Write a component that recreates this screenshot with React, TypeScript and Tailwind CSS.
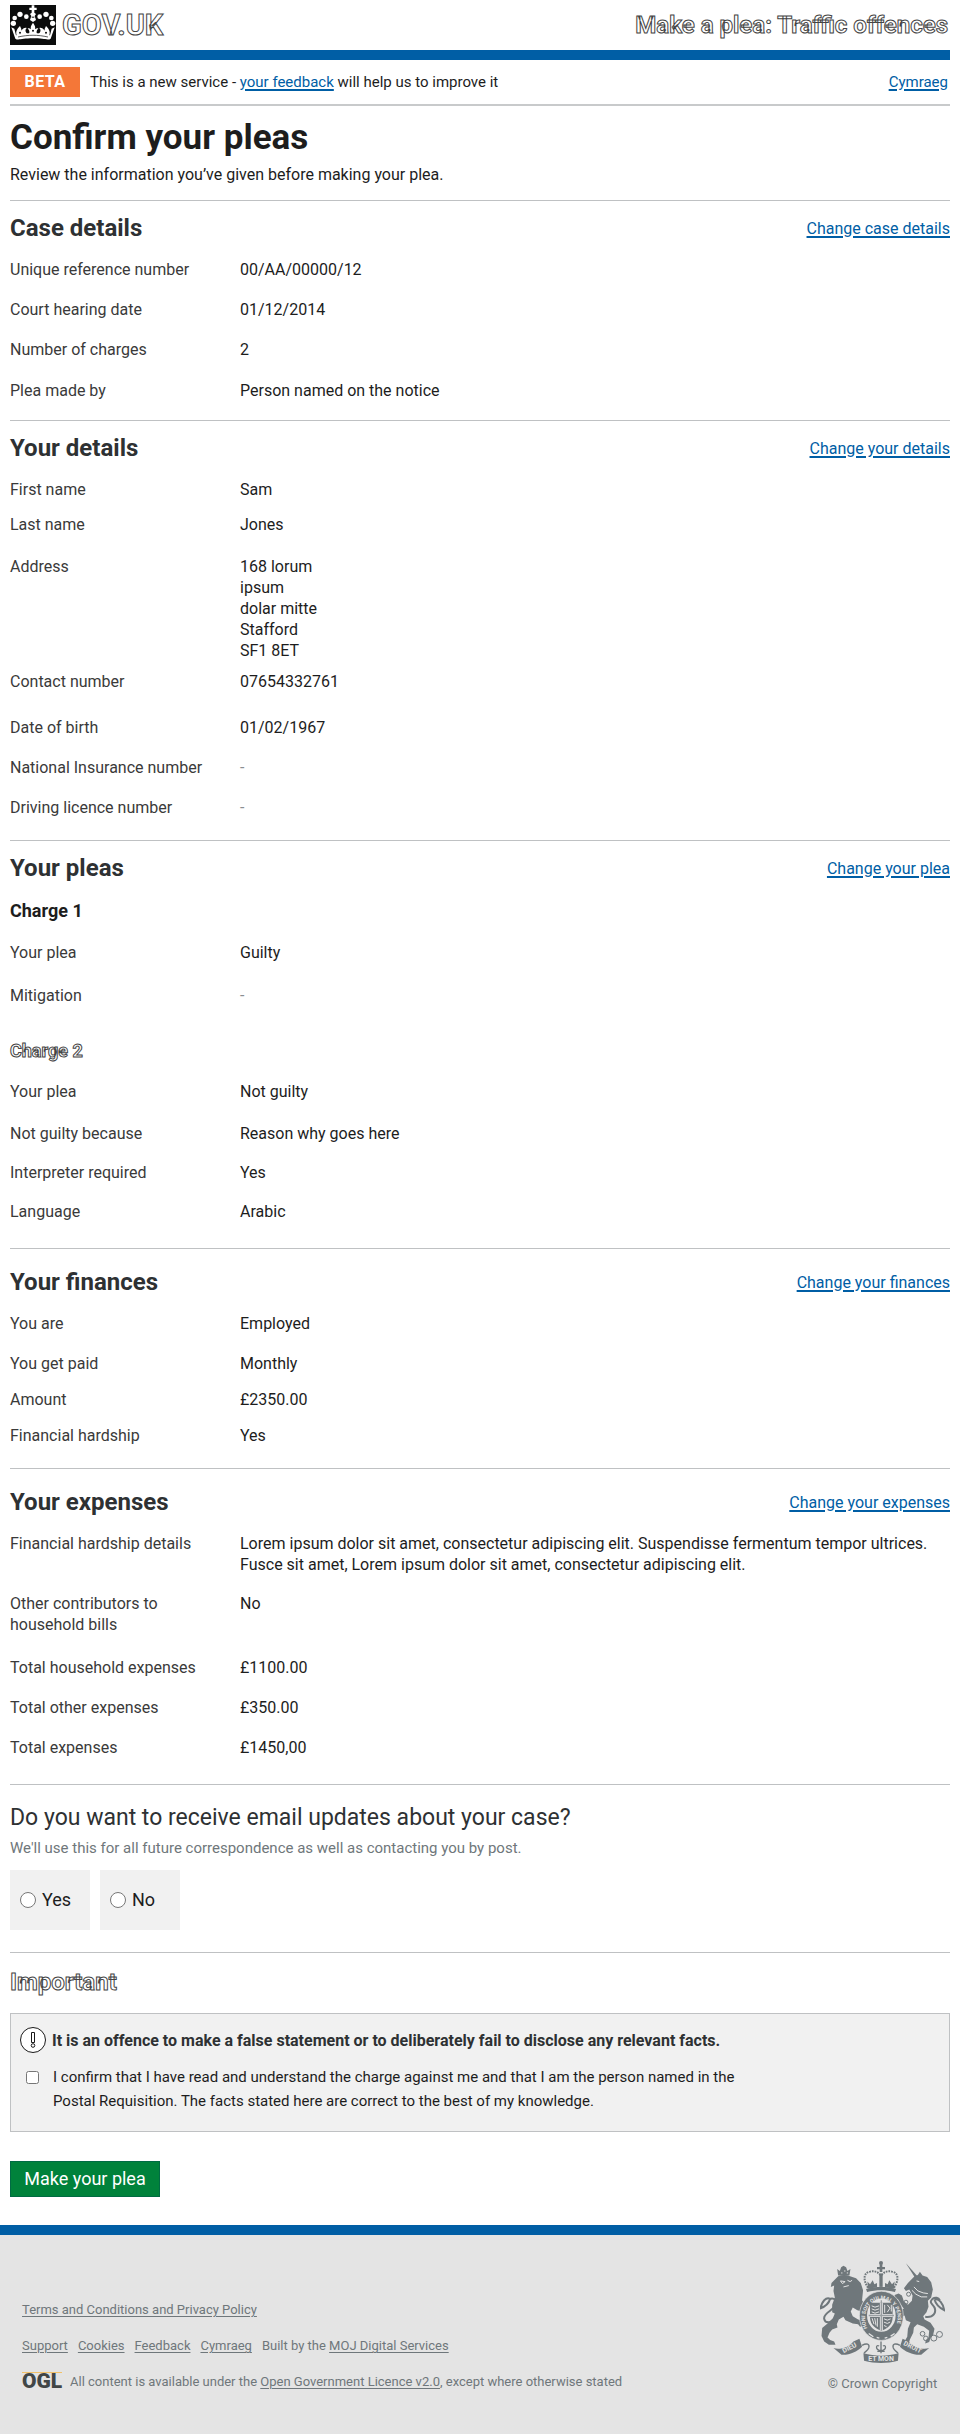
import type { ReactNode } from "react";

const outlined = "text-white [-webkit-text-stroke:1px_#444]";

function CrownLogo() {
  const pearls: [number, number, number][] = [
    [40, 70, 8],
    [44, 54, 7],
    [60, 43, 8],
    [79, 50, 7],
    [158, 70, 8],
    [154, 54, 7],
    [138, 43, 8],
    [119, 50, 7],
  ];
  return (
    <svg viewBox="30 15 138 120" className="h-10 w-[46px] shrink-0" aria-hidden="true">
      <rect x="30" y="15" width="138" height="120" fill="#0b0c0c" />
      <g fill="#fff">
        {pearls.map(([x, y, r]) => (
          <circle key={`${x}-${y}`} cx={x} cy={y} r={r} />
        ))}
        <path d="M95 16h8v7h7v7h-7v8l5 4-4 6 4 12-9 6-9-6 4-12-4-6 5-4v-8h-7v-7h7z" />
        <path d="M34 82l9 4 5 20c34-9 68-9 102 0l5-20 9-4-12 34c-8 6-20-1-53-1s-45 7-53 1z" />
        <path d="M50 106c-4-12 2-20 10-28 3 6 5 10 4 14 4-6 10-10 16-8-6 6-4 12 2 18zM148 106c4-12-2-20-10-28-3 6-5 10-4 14-4-6-10-10-16-8 6 6 4 12-2 18z" />
        <path d="M99 68c6 8 8 14 6 20 4-4 8-4 10-2-6 4-6 10-4 16H87c2-6 2-12-4-16 2-2 6-2 10 2-2-6 0-12 6-20z" />
      </g>
      <g fill="#0b0c0c">
        <circle cx="60" cy="98" r="3" />
        <circle cx="138" cy="98" r="3" />
        <circle cx="99" cy="92" r="3" />
        <path d="M95 50h8v3h-8z" />
      </g>
      <path d="M54 111c32-7 58-7 90 0" fill="none" stroke="#0b0c0c" strokeWidth="2" />
    </svg>
  );
}

function RoyalArms() {
  return (
    <svg viewBox="120 122 375 310" className="h-[103px] w-[125px]" aria-hidden="true">
      {/* crown */}
      <g fill="#6f777b">
        <circle cx="303" cy="128" r="6" />
        <path d="M299 132h8v8h8v7h-8v8h-8v-8h-8v-7h8z" />
        <path d="M258 206c30-8 60-8 90 0l-3 9c-28-7-56-7-84 0z" />
        <path d="M262 184l8 8 8-12 5 12 8-4v14l-27 3zM344 184l-8 8-8-12-5 12-8-4v14l27 3z" />
        <path d="M298 160h10v40h-10z" />
      </g>
      <g fill="none" stroke="#6f777b" strokeWidth="6" strokeDasharray="5 3">
        <path d="M264 202c-14-20-16-44 6-48 14-4 26 2 32 12" />
        <path d="M342 202c14-20 16-44-6-48-14-4-26 2-32 12" />
      </g>

      {/* lion */}
      <g fill="#6f777b">
        <path d="M171 146l8 6 4-11 7-5 8 5 4 11 9-6-3 20h-34z" />
        <path d="M174 168q18-8 36 0l18 6 14 14 7 22-3 30 8 14-8 20-14-4-14-8-6 12 6 14 16 10 14 4 2 14-10 4-6-8-16-2-22-10-6-10-14 8-6 14 2 10-16 6-8 10-6 14 8 8 12 4 4 10-20 0-14-10-8-16 2-24 16-14 16-16 6-14-8-4 0-22 8-22-4-20 2-16-10 4 2-12 6-6z" />
      </g>
      <path
        d="M168 288c-16 26-34 20-36 8-4-20 36-26 36-48 0-12-12-16-20-10M150 236c-12-8-26 10-29 28 12-4 24-12 29-28z"
        fill="none"
        stroke="#6f777b"
        strokeWidth="6"
      />
      <path
        d="M181 182l14 2-8 6zM202 180l8 4 6-4M190 200l16-4M183 158h4M192 152h4M200 158h4"
        fill="none"
        stroke="#e4e4e4"
        strokeWidth="3"
      />

      {/* unicorn */}
      <g fill="#6f777b">
        <path d="M378 129l34 38-7 5z" />
        <path d="M404 168l10-4 6-10 8 12 14 4 12 16 5 22-5 24-10 10 2 18-6 16-10 12 4 10 18 10 12 18-4 18-8 10-4 12-12 4 2-10 8-8 2-20-16-12-20-8-10 10-2 16-10 20-4 14 10 6-4 8-18-4-4-12 12-20 2-24 8-20-14-6-4-14-10 4-8-10 6-12 10-2-14-18-4-12-10 0 0-12 12-4 10 6 6 18 12 10 12-12 2-16-10-18-10 4-6-8 12-16z" />
      </g>
      <path
        d="M436 290c26 4 34-14 28-28-6-12-18-14-6-26 8-6 18-4 22 4M464 238c14-4 26 12 29 32-12-6-24-14-29-32"
        fill="none"
        stroke="#6f777b"
        strokeWidth="6"
      />
      <path
        d="M396 210l12 12 16 8 18 0M402 200l12 12 16 6 14 2M410 182l8 2"
        stroke="#e4e4e4"
        strokeWidth="3"
        fill="none"
      />
      <g fill="none" stroke="#6f777b" strokeWidth="3">
        <circle cx="428" cy="341" r="7" />
        <circle cx="438" cy="355" r="7" />
        <circle cx="462" cy="354" r="9" />
        <circle cx="479" cy="343" r="9" />
        <circle cx="386" cy="222" r="6" />
        <circle cx="378" cy="246" r="6" />
      </g>

      {/* garter and shield */}
      <ellipse cx="304" cy="287" rx="66" ry="74" fill="#6f777b" stroke="#e4e4e4" strokeWidth="2" />
      <ellipse cx="304" cy="285" rx="43" ry="50" fill="#e4e4e4" />
      <path id="garter" d="M262 324A49 57 0 1 1 346 324" fill="none" />
      <text fill="#e4e4e4" fontSize="16" fontWeight="700" fontFamily="Roboto, sans-serif">
        <textPath href="#garter">HONI SOIT QUI MAL Y PENSE</textPath>
      </text>
      <path d="M270 248h68v44c0 22-18 34-34 40-16-6-34-18-34-40z" fill="#6f777b" />
      <path d="M304 248v84M270 286h68" stroke="#e4e4e4" strokeWidth="9" />
      <path d="M304 240v92M266 286h76" stroke="#9aa0a3" strokeWidth="4" />
      <path
        d="M275 257l10 4 12-4M275 266l10 4 12-4M275 275l10 4 12-4M312 296l10 4 10-4M312 306l10 4 8-4M312 316l8 4M314 254v24M322 254l8 10-8 12M334 254v20M276 294l6 18M284 294l4 22M292 294v26"
        fill="none"
        stroke="#e4e4e4"
        strokeWidth="3"
      />
      <path d="M266 340l14 10M290 352l8 2M314 354l8-2M332 348l12-8" stroke="#e4e4e4" strokeWidth="4" />

      {/* motto ribbon */}
      <g fill="#6f777b">
        <path d="M160 384c20 6 44-2 60-20l18-8 8 24c-16 16-40 26-62 24z" />
        <path d="M448 384c-20 6-46-2-62-20l-18-8-8 24c16 16 42 26 64 24z" />
        <path d="M250 400c36 10 70 10 106 0l-2 22c-34 9-68 9-102 0z" />
      </g>
      <g fill="none" stroke="#6f777b" strokeWidth="4">
        <path d="M246 376c14-8 24-4 20 8-4 10-10 8-14 16" />
        <path d="M360 376c-14-8-24-4-20 8 4 10 10 8 14 16" />
        <path d="M303 364v36M303 392c-20-4-14-20-6-14M303 392c20-4 14-20 6-14M292 394h22" />
      </g>
      <g fill="#e4e4e4" fontSize="21" fontWeight="700" fontFamily="Roboto, sans-serif" textAnchor="middle">
        <text transform="translate(211 389) rotate(-27)">DIEU</text>
        <text transform="translate(395 387) rotate(27)" fontSize="20">
          DROIT
        </text>
        <text x="303" y="423">
          ET MON
        </text>
      </g>
    </svg>
  );
}

function WarningIcon() {
  return (
    <svg viewBox="0 0 26 26" className="size-[26px] shrink-0" aria-hidden="true">
      <circle cx="13" cy="13" r="12.5" fill="#fff" stroke="#1a1a1a" />
      <path d="M11.5 5.5h3v10h-3z" fill="none" stroke="#1a1a1a" />
      <circle cx="13" cy="18.5" r="1.8" fill="none" stroke="#1a1a1a" />
    </svg>
  );
}

function BlueLink({ children }: { children: ReactNode }) {
  return (
    <a href="#" className="text-[#005ea5] underline decoration-2 underline-offset-2">
      {children}
    </a>
  );
}

function FooterLink({ children }: { children: ReactNode }) {
  return (
    <a href="#" className="underline decoration-1 underline-offset-2">
      {children}
    </a>
  );
}

function Section({
  title,
  link,
  className,
  children,
}: {
  title: string;
  link: string;
  className: string;
  children: ReactNode;
}) {
  return (
    <section className={`border-t border-[#bfc1c3] ${className}`}>
      <div className="mb-4 flex items-center justify-between">
        <h2 className="text-2xl/[30px] font-bold text-[#2e3133]">{title}</h2>
        <BlueLink>{link}</BlueLink>
      </div>
      {children}
    </section>
  );
}

function Row({ label, className, children }: { label: string; className: string; children: ReactNode }) {
  return (
    <div className={`grid grid-cols-[230px_1fr] ${className}`}>
      <dt className="pr-4 text-[#3a3a3a]">{label}</dt>
      <dd>{children}</dd>
    </div>
  );
}

const empty = <span className="text-[#8a8f92]">-</span>;

export default function App() {
  return (
    <div className="flex min-h-screen flex-col bg-white font-[Roboto,sans-serif] text-base/[21px] text-[#1d1d1d]">
      <div className="px-[10px]">
        <header className="flex items-center justify-between border-b-10 border-[#005ea5] py-[5px]">
          <a href="#" className="flex items-center gap-[6px]">
            <CrownLogo />
            <span className={`text-[29px]/10 font-bold ${outlined}`}>GOV.UK</span>
          </a>
          <span className={`pr-[2px] text-2xl/10 font-bold ${outlined}`}>Make a plea: Traffic offences</span>
        </header>

        <div className="flex items-center border-b-2 border-[#c8cacb] py-[7px] text-[15px]">
          <strong className="mr-[10px] flex h-[30px] w-[70px] items-center justify-center bg-[#f47738] text-base font-bold tracking-wide text-white">
            BETA
          </strong>
          <p>
            This is a new service - <BlueLink>your feedback</BlueLink> will help us to improve it
          </p>
          <span className="ml-auto pr-[2px]">
            <BlueLink>Cymraeg</BlueLink>
          </span>
        </div>

        <main>
          <h1 className="mt-[11px] text-[35px]/[42px] font-bold">Confirm your pleas</h1>
          <p className="mt-[5px] mb-[15px]">Review the information you’ve given before making your plea.</p>

          <Section title="Case details" link="Change case details" className="pt-3">
            <dl>
              <Row label="Unique reference number" className="pb-[19px]">00/AA/00000/12</Row>
              <Row label="Court hearing date" className="pb-[19px]">01/12/2014</Row>
              <Row label="Number of charges" className="pb-[20px]">2</Row>
              <Row label="Plea made by" className="pb-[19px]">Person named on the notice</Row>
            </dl>
          </Section>

          <Section title="Your details" link="Change your details" className="pt-3">
            <dl>
              <Row label="First name" className="pb-[14px]">Sam</Row>
              <Row label="Last name" className="pb-[21px]">Jones</Row>
              <Row label="Address" className="pb-[10px]">
                168 lorum
                <br />
                ipsum
                <br />
                dolar mitte
                <br />
                Stafford
                <br />
                SF1 8ET
              </Row>
              <Row label="Contact number" className="pb-[25px]">07654332761</Row>
              <Row label="Date of birth" className="pb-[19px]">01/02/1967</Row>
              <Row label="National Insurance number" className="pb-[19px]">{empty}</Row>
              <Row label="Driving licence number" className="pb-[22px]">{empty}</Row>
            </dl>
          </Section>

          <Section title="Your pleas" link="Change your plea" className="pt-3">
            <h3 className="mb-[19px] text-lg/6 font-bold">Charge 1</h3>
            <dl>
              <Row label="Your plea" className="pb-[22px]">Guilty</Row>
              <Row label="Mitigation" className="pb-[33px]">{empty}</Row>
            </dl>
            <h3 className={`mb-[18px] text-lg/6 font-bold ${outlined}`}>Charge 2</h3>
            <dl>
              <Row label="Your plea" className="pb-[21px]">Not guilty</Row>
              <Row label="Not guilty because" className="pb-[18px]">Reason why goes here</Row>
              <Row label="Interpreter required" className="pb-[18px]">Yes</Row>
              <Row label="Language" className="pb-[26px]">Arabic</Row>
            </dl>
          </Section>

          <Section title="Your finances" link="Change your finances" className="pt-[18px]">
            <dl>
              <Row label="You are" className="pb-[19px]">Employed</Row>
              <Row label="You get paid" className="pb-[15px]">Monthly</Row>
              <Row label="Amount" className="pb-[15px]">£2350.00</Row>
              <Row label="Financial hardship" className="pb-[22px]">Yes</Row>
            </dl>
          </Section>

          <Section title="Your expenses" link="Change your expenses" className="pt-[18px]">
            <dl>
              <Row label="Financial hardship details" className="pb-[18px]">
                Lorem ipsum dolor sit amet, consectetur adipiscing elit. Suspendisse fermentum tempor ultrices.
                Fusce sit amet, Lorem ipsum dolor sit amet, consectetur adipiscing elit.
              </Row>
              <Row label="Other contributors to household bills" className="pb-[22px]">No</Row>
              <Row label="Total household expenses" className="pb-[19px]">£1100.00</Row>
              <Row label="Total other expenses" className="pb-[19px]">£350.00</Row>
              <Row label="Total expenses" className="pb-[26px]">£1450,00</Row>
            </dl>
          </Section>

          <form>
            <fieldset className="border-t border-[#bfc1c3] pt-[18px] pb-[22px]">
              <legend className="contents">
                <span className="block text-[23px]/[30px] text-[#2e3133]">
                  Do you want to receive email updates about your case?
                </span>
              </legend>
              <p className="mt-[5px] mb-[11px] text-[15px] text-[#6f777b]">
                We'll use this for all future correspondence as well as contacting you by post.
              </p>
              <div className="flex gap-[10px]">
                <label className="flex h-15 w-20 items-center gap-[6px] bg-[#f1f1f1] pl-[10px] text-lg">
                  <input type="radio" name="updates" className="size-4" />
                  Yes
                </label>
                <label className="flex h-15 w-20 items-center gap-[6px] bg-[#f1f1f1] pl-[10px] text-lg">
                  <input type="radio" name="updates" className="size-4" />
                  No
                </label>
              </div>
            </fieldset>

            <section className="border-t border-[#bfc1c3] pt-[14px]">
              <h2 className={`text-2xl/[30px] font-bold ${outlined}`}>Important</h2>
              <div className="mt-4 border border-[#bfc1c3] bg-[#f1f1f1] px-[9px] pt-[13px] pb-[18px]">
                <div className="flex items-center gap-[6px]">
                  <WarningIcon />
                  <strong className="font-bold text-[#2e3133]">
                    It is an offence to make a false statement or to deliberately fail to disclose any relevant
                    facts.
                  </strong>
                </div>
                <label className="mt-3 flex items-start text-[15px]/6">
                  <span className="flex h-6 w-[33px] shrink-0 items-center pl-[6px]">
                    <input type="checkbox" className="size-[13px]" />
                  </span>
                  <span className="max-w-[700px]">
                    I confirm that I have read and understand the charge against me and that I am the person named
                    in the Postal Requisition. The facts stated here are correct to the best of my knowledge.
                  </span>
                </label>
              </div>
            </section>

            <button
              type="button"
              className="mt-[29px] mb-7 block h-9 w-[150px] border border-[#006b43] bg-[#00823b] text-lg/6 text-white"
            >
              Make your plea
            </button>
          </form>
        </main>
      </div>

      <footer className="flex grow justify-between border-t-10 border-[#005ea5] bg-[#e4e4e4] pr-[15px] pl-[22px] text-[13px]/5 text-[#6f777b]">
        <div className="flex flex-col gap-4 pt-[65px] pb-10">
          <p>
            <FooterLink>Terms and Conditions and Privacy Policy</FooterLink>
          </p>
          <div className="flex gap-[10px]">
            <FooterLink>Support</FooterLink>
            <FooterLink>Cookies</FooterLink>
            <FooterLink>Feedback</FooterLink>
            <FooterLink>Cymraeg</FooterLink>
            <span>
              Built by the <FooterLink>MOJ Digital Services</FooterLink>
            </span>
          </div>
          <div className="flex items-center gap-2">
            <span className="h-5 w-10 border-t border-[#f2c26b] text-[21px]/[17px] font-black text-[#414647]">
              OGL
            </span>
            <p>
              All content is available under the <FooterLink>Open Government Licence v2.0</FooterLink>, except
              where otherwise stated
            </p>
          </div>
        </div>
        <div className="flex flex-col items-center gap-[10px] pt-[26px]">
          <RoyalArms />
          <p>© Crown Copyright</p>
        </div>
      </footer>
    </div>
  );
}
